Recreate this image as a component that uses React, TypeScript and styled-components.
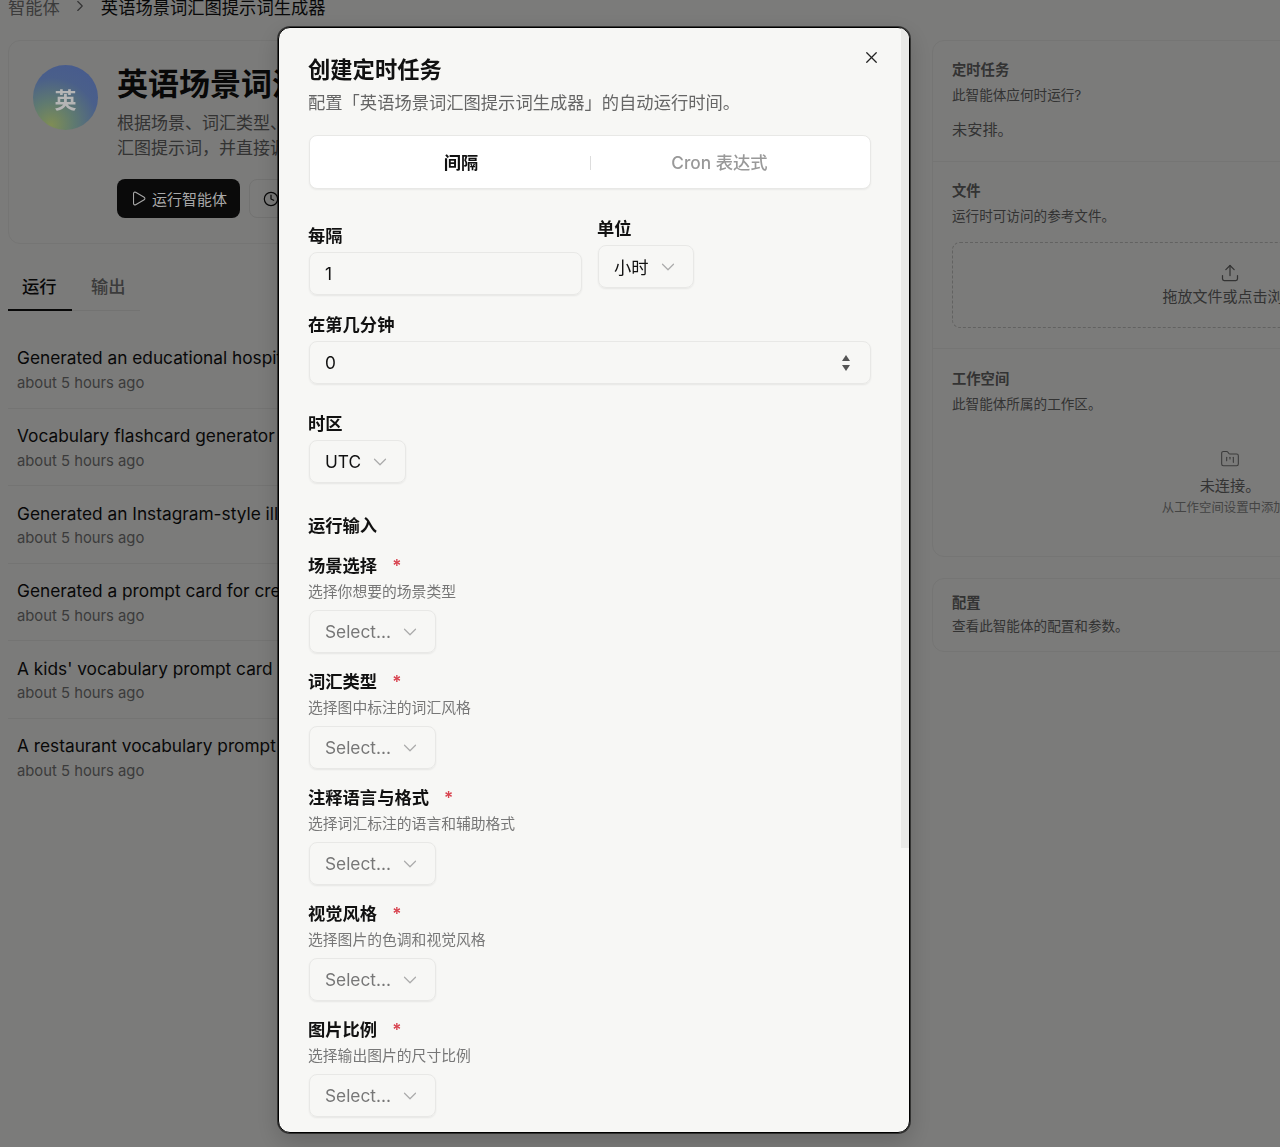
import styled, { createGlobalStyle } from "styled-components";
import {
  ChevronDown,
  ChevronRight,
  Clock,
  FolderKanban,
  Play,
  Upload,
  X,
} from "lucide-react";

const GlobalStyle = createGlobalStyle`
  html, body {
    margin: 0;
    height: 100%;
    overflow: hidden;
    background: #f7f7f5;
  }
  * {
    box-sizing: border-box;
  }
  body {
    font-family: Inter, "Noto Sans CJK SC", sans-serif;
    color: #111;
  }
`;

const Page = styled.div`
  width: 1536px;
  height: 1147px;
  padding: 0 8px;
  overflow: hidden;
`;

const Crumbs = styled.nav`
  display: flex;
  align-items: center;
  height: 24px;
  margin-top: -6px;
  font-size: 17.3px;
  color: #777;

  svg {
    margin: 0 11.5px;
    color: #666;
  }

  strong {
    font-weight: 400;
    color: #111;
  }
`;

const Columns = styled.div`
  display: grid;
  grid-template-columns: 900px 596px;
  gap: 24px;
  margin-top: 22px;
`;

const Hero = styled.section`
  display: flex;
  gap: 19px;
  height: 204px;
  padding: 24px;
  border: 1px solid #eaeae8;
  border-radius: 12px;
`;

const Avatar = styled.div`
  position: relative;
  z-index: 11;
  flex: none;
  display: flex;
  align-items: center;
  justify-content: center;
  width: 65px;
  height: 65px;
  border-radius: 50%;
  background: radial-gradient(
    circle at 28% 92%,
    #7f8d55 0%,
    #5f7a70 30%,
    #4a5f8a 62%,
    #46598f 100%
  );
  color: #b5b5b5;
  font-size: 22px;
  font-weight: 700;
`;

const HeroBody = styled.div`
  flex: 1;
`;

const HeroTitle = styled.h1`
  margin: 0;
  font-family: "Liberation Serif", "Noto Sans CJK SC", serif;
  font-size: 31px;
  font-weight: 700;
  line-height: 40px;
  color: #111;
`;

const HeroText = styled.p`
  margin: 6px 0 0;
  font-size: 17px;
  line-height: 25px;
  color: #666;
`;

const HeroActions = styled.div`
  display: flex;
  gap: 9px;
  margin-top: 18px;
`;

const RunButton = styled.button`
  position: relative;
  z-index: 11;
  display: flex;
  align-items: center;
  gap: 5px;
  height: 39px;
  padding: 0 12.5px 0 13px;
  border: 0;
  border-radius: 8px;
  background: #0a0a0a;
  color: #a8a8a8;
  font: inherit;
  font-size: 15px;
`;

const GhostButton = styled.button`
  display: flex;
  align-items: center;
  gap: 6px;
  height: 39px;
  padding: 0 13px;
  border: 1px solid #e4e4e2;
  border-radius: 8px;
  background: transparent;
  color: #111;
  font: inherit;
  font-size: 15px;
`;

const Tabs = styled.div`
  display: flex;
  width: 132px;
  margin-top: 18px;
  border-bottom: 1px solid #e6e6e4;
`;

const Tab = styled.div<{ $active?: boolean }>`
  flex: none;
  width: ${(p) => (p.$active ? "64px" : "68px")};
  padding: 12.5px 0 10.5px ${(p) => (p.$active ? "14px" : "19px")};
  margin-bottom: -1px;
  border-bottom: 2px solid ${(p) => (p.$active ? "#111" : "transparent")};
  font-size: 17.3px;
  line-height: 24px;
  font-weight: 500;
  color: ${(p) => (p.$active ? "#111" : "#777")};
`;

const RunList = styled.ul`
  list-style: none;
  margin: 20px 0 0;
  padding: 0;
`;

const RunItem = styled.li`
  height: 77.6px;
  padding: 15.4px 9px 0;
  border-bottom: 1px solid #e9e9e7;

  &:last-child {
    border-bottom: 0;
  }
`;

const RunTitle = styled.div`
  font-size: 17.3px;
  line-height: 24px;
  white-space: nowrap;
  color: #111;
`;

const RunMeta = styled.div`
  margin-top: 1.6px;
  font-size: 14.8px;
  line-height: 22px;
  color: #777;
`;

const Card = styled.section`
  border: 1px solid #eaeae8;
  border-radius: 12px;
  margin-bottom: 21px;
`;

const CardSection = styled.div<{ $height: number; $top?: number }>`
  height: ${(p) => p.$height}px;
  padding: ${(p) => p.$top ?? 19}px 19px 0;
  border-bottom: 1px solid #eaeae8;

  &:last-child {
    border-bottom: 0;
  }
`;

const CardTitle = styled.h3`
  margin: 0;
  font-size: 14.3px;
  line-height: 20px;
  font-weight: 600;
  color: #666;
`;

const CardText = styled.p<{ $gap?: number }>`
  margin: ${(p) => p.$gap ?? 5}px 0 0;
  font-size: 13.6px;
  line-height: 20px;
  color: #666;
`;

const Unscheduled = styled.p`
  margin: 13px 0 0;
  font-size: 15.2px;
  line-height: 24px;
  color: #666;
`;

const DropZone = styled.div`
  display: flex;
  flex-direction: column;
  align-items: center;
  gap: 3px;
  height: 86px;
  margin-top: 16px;
  padding-top: 20px;
  border: 1px dashed #c4c4c2;
  border-radius: 8px;
  font-size: 15px;
  line-height: 22px;
  color: #666;

  svg {
    color: #666;
  }
`;

const EmptyState = styled.div`
  display: flex;
  flex-direction: column;
  align-items: center;
  margin-top: 35px;
  color: #666;

  svg {
    color: #777;
  }
`;

const EmptyTitle = styled.div`
  margin-top: 5px;
  font-size: 15.2px;
  line-height: 23px;
`;

const EmptyHint = styled.div`
  margin-top: 1px;
  font-size: 12.4px;
  line-height: 20px;
  color: #888;
`;

const Overlay = styled.div`
  position: fixed;
  inset: 0;
  z-index: 10;
  padding: 27px 0 0 278px;
  background: rgba(0, 0, 0, 0.5);
`;

const Modal = styled.div`
  position: relative;
  width: 632px;
  height: 1106px;
  padding: 27px 38px 0 29px;
  overflow: hidden;
  border: 1px solid #000;
  border-radius: 12px;
  background: #f7f7f5;
  box-shadow: 0 0 0 1px rgba(0, 0, 0, 0.55), 0 8px 24px rgba(0, 0, 0, 0.18);
`;

const ScrollThumb = styled.div`
  position: absolute;
  top: 0;
  right: 0;
  width: 8px;
  height: 820px;
  background: #e9e9e7;
`;

const CloseButton = styled.button`
  position: absolute;
  top: 20px;
  right: 28px;
  display: flex;
  padding: 0;
  border: 0;
  background: none;
  color: #222;
`;

const ModalTitle = styled.h2`
  margin: 0;
  font-size: 22.3px;
  line-height: 30px;
  font-weight: 600;
  color: #111;
`;

const ModalText = styled.p`
  margin: 6px 0 0;
  font-size: 17.3px;
  line-height: 24px;
  color: #666;
`;

const ModeTabs = styled.div`
  display: grid;
  grid-template-columns: 1fr 1fr;
  align-items: center;
  height: 54px;
  margin: 20px 0 0 1px;
  padding-top: 1px;
  border: 1px solid #e8e8e6;
  border-radius: 8px;
  background: #fff;
  box-shadow: 0 1px 2px rgba(0, 0, 0, 0.06);
`;

const ModeTab = styled.div<{ $active?: boolean }>`
  padding-left: ${(p) => (p.$active ? "22px" : "0")};
  padding-right: ${(p) => (p.$active ? "0" : "22px")};
  border-left: ${(p) => (p.$active ? "0" : "1px solid #ddd")};
  text-align: center;
  font-size: 17.3px;
  line-height: 14px;
  font-weight: ${(p) => (p.$active ? 600 : 500)};
  color: ${(p) => (p.$active ? "#111" : "#999")};
`;

const IntervalRow = styled.div`
  display: flex;
  align-items: flex-start;
  gap: 15px;
  margin-top: 27px;
`;

const Field = styled.div<{ $top?: number; $grow?: boolean }>`
  display: flex;
  flex-direction: column;
  align-items: ${(p) => (p.$grow ? "stretch" : "flex-start")};
  width: ${(p) => (p.$grow ? "274px" : "auto")};
  margin-top: ${(p) => p.$top ?? 0}px;
`;

const Label = styled.label`
  display: flex;
  gap: 15px;
  padding-top: 1px;
  font-size: 17.3px;
  line-height: 24px;
  font-weight: 600;
  color: #111;
`;

const Required = styled.span`
  margin-top: 2px;
  color: #d8434f;
  font-size: 17px;
  line-height: 20px;
`;

const Hint = styled.div`
  margin-top: 5px;
  font-size: 14.8px;
  line-height: 18px;
  color: #777;
`;

const SectionHeading = styled.h4`
  margin: 30px 0 0;
  padding-top: 1px;
  font-size: 17.3px;
  line-height: 24px;
  font-weight: 600;
  color: #111;
`;

const InputBox = styled.div`
  display: flex;
  align-items: center;
  height: 43px;
  margin: 4px 0 0 1px;
  padding: 0 15px;
  border: 1px solid #e8e8e6;
  border-radius: 8px;
  box-shadow: 0 1px 2px rgba(0, 0, 0, 0.07);

  input {
    flex: 1;
    min-width: 0;
    padding: 0;
    border: 0;
    outline: 0;
    background: none;
    font: inherit;
    font-size: 17.3px;
    color: #111;
  }
`;

const Stepper = styled.svg`
  flex: none;
  margin-right: 5px;
`;

const SelectBox = styled.button<{ $placeholder?: boolean }>`
  display: flex;
  align-items: center;
  gap: 8px;
  height: 43px;
  margin: ${(p) => (p.$placeholder ? "9px" : "4px")} 0 0 1px;
  padding: 0 14px 0 15px;
  border: 1px solid #e8e8e6;
  border-radius: 8px;
  background: transparent;
  box-shadow: 0 1px 2px rgba(0, 0, 0, 0.07);
  font: inherit;
  font-size: 17.3px;
  color: ${(p) => (p.$placeholder ? "#777" : "#111")};

  svg {
    color: #aaa;
  }
`;

const runs = [
  "Generated an educational hospital vocabulary prompt card",
  "Vocabulary flashcard generator for travel English scenes",
  "Generated an Instagram-style illustrated vocabulary chart",
  "Generated a prompt card for creating scene vocabulary",
  "A kids' vocabulary prompt card with labelled objects",
  "A restaurant vocabulary prompt card with bilingual labels",
];

const inputs = [
  { label: "场景选择", hint: "选择你想要的场景类型" },
  { label: "词汇类型", hint: "选择图中标注的词汇风格" },
  { label: "注释语言与格式", hint: "选择词汇标注的语言和辅助格式" },
  { label: "视觉风格", hint: "选择图片的色调和视觉风格" },
  { label: "图片比例", hint: "选择输出图片的尺寸比例" },
];

export default function App() {
  return (
    <>
      <GlobalStyle />
      <Page>
        <Crumbs>
          <span>智能体</span>
          <ChevronRight size={18} strokeWidth={1.5} />
          <strong>英语场景词汇图提示词生成器</strong>
        </Crumbs>
        <Columns>
          <main>
            <Hero>
              <Avatar>英</Avatar>
              <HeroBody>
                <HeroTitle>英语场景词汇图提示词生成器</HeroTitle>
                <HeroText>
                  根据场景、词汇类型、注释语言和视觉风格，生成结构化的英语场景词
                  <br />
                  汇图提示词，并直接调用模型生成图片。
                </HeroText>
                <HeroActions>
                  <RunButton>
                    <Play size={17} strokeWidth={1.5} />
                    运行智能体
                  </RunButton>
                  <GhostButton>
                    <Clock size={16} strokeWidth={1.8} />
                    定时任务
                  </GhostButton>
                </HeroActions>
              </HeroBody>
            </Hero>
            <Tabs>
              <Tab $active>运行</Tab>
              <Tab>输出</Tab>
            </Tabs>
            <RunList>
              {runs.map((run) => (
                <RunItem key={run}>
                  <RunTitle>{run}</RunTitle>
                  <RunMeta>about 5 hours ago</RunMeta>
                </RunItem>
              ))}
            </RunList>
          </main>
          <aside>
            <Card>
              <CardSection $height={121}>
                <CardTitle>定时任务</CardTitle>
                <CardText>此智能体应何时运行?</CardText>
                <Unscheduled>未安排。</Unscheduled>
              </CardSection>
              <CardSection $height={187}>
                <CardTitle>文件</CardTitle>
                <CardText>运行时可访问的参考文件。</CardText>
                <DropZone>
                  <Upload size={20} strokeWidth={1.5} />
                  拖放文件或点击浏览
                </DropZone>
              </CardSection>
              <CardSection $height={207} $top={20}>
                <CardTitle>工作空间</CardTitle>
                <CardText>此智能体所属的工作区。</CardText>
                <EmptyState>
                  <FolderKanban size={20} strokeWidth={1.3} />
                  <EmptyTitle>未连接。</EmptyTitle>
                  <EmptyHint>从工作空间设置中添加。</EmptyHint>
                </EmptyState>
              </CardSection>
            </Card>
            <Card>
              <CardSection $height={72} $top={14}>
                <CardTitle>配置</CardTitle>
                <CardText $gap={3}>查看此智能体的配置和参数。</CardText>
              </CardSection>
            </Card>
          </aside>
        </Columns>
      </Page>
      <Overlay>
        <Modal>
          <ScrollThumb />
          <CloseButton aria-label="关闭">
            <X size={19} strokeWidth={1.6} />
          </CloseButton>
          <ModalTitle>创建定时任务</ModalTitle>
          <ModalText>配置「英语场景词汇图提示词生成器」的自动运行时间。</ModalText>
          <ModeTabs>
            <ModeTab $active>间隔</ModeTab>
            <ModeTab>Cron 表达式</ModeTab>
          </ModeTabs>
          <IntervalRow>
            <Field $top={7} $grow>
              <Label>每隔</Label>
              <InputBox>
                <input readOnly value="1" />
              </InputBox>
            </Field>
            <Field>
              <Label>单位</Label>
              <SelectBox>
                小时
                <ChevronDown size={22} strokeWidth={1.3} />
              </SelectBox>
            </Field>
          </IntervalRow>
          <Field $top={17}>
            <Label>在第几分钟</Label>
          </Field>
          <InputBox>
            <input readOnly value="0" />
            <Stepper width="8" height="16" viewBox="0 0 8 16">
              <path d="M4 0 L8 6 H0 Z" fill="#555" />
              <path d="M4 16 L8 10 H0 Z" fill="#555" />
            </Stepper>
          </InputBox>
          <Field $top={27}>
            <Label>时区</Label>
            <SelectBox>
              UTC
              <ChevronDown size={22} strokeWidth={1.3} />
            </SelectBox>
          </Field>
          <SectionHeading>运行输入</SectionHeading>
          {inputs.map((item, index) => (
            <Field key={item.label} $top={index === 0 ? 15 : 16}>
              <Label>
                {item.label}
                <Required>*</Required>
              </Label>
              <Hint>{item.hint}</Hint>
              <SelectBox $placeholder>
                Select...
                <ChevronDown size={22} strokeWidth={1.3} />
              </SelectBox>
            </Field>
          ))}
        </Modal>
      </Overlay>
    </>
  );
}
